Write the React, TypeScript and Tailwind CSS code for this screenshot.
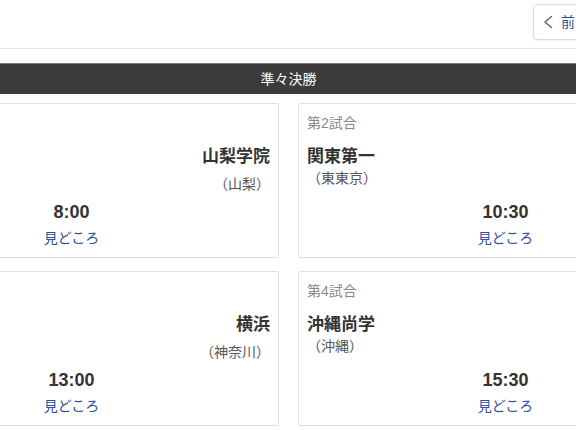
type Team = { name: string; pref: string };

interface Match {
  no: number;
  time: string;
  home: Team;
  away: Team;
}

const matches: Match[] = [
  {
    no: 1,
    time: "8:00",
    home: { name: "京都国際", pref: "京都" },
    away: { name: "山梨学院", pref: "山梨" },
  },
  {
    no: 2,
    time: "10:30",
    home: { name: "関東第一", pref: "東東京" },
    away: { name: "日大三", pref: "西東京" },
  },
  {
    no: 3,
    time: "13:00",
    home: { name: "県岐阜商", pref: "岐阜" },
    away: { name: "横浜", pref: "神奈川" },
  },
  {
    no: 4,
    time: "15:30",
    home: { name: "沖縄尚学", pref: "沖縄" },
    away: { name: "東洋大姫路", pref: "兵庫" },
  },
];

function Chevron({ dir }: { dir: "left" | "right" }) {
  return (
    <svg width="10" height="14" viewBox="0 0 10 14" fill="none">
      <polyline
        points={dir === "left" ? "8.5,1.5 2,7 8.5,12.5" : "1.5,1.5 8,7 1.5,12.5"}
        stroke="#666"
        strokeWidth="1.5"
        strokeLinecap="round"
        strokeLinejoin="round"
      />
    </svg>
  );
}

function MatchCard({ m }: { m: Match }) {
  return (
    <div className="flex h-[155px] flex-col rounded-[2px] border border-[#e0e0e0] bg-white px-2 pt-[10px]">
      <p className="text-[14px] leading-[18px] text-[#888]">第{m.no}試合</p>

      <div className="mt-[13px] flex items-start justify-between">
        <div>
          <p className="text-[17px] font-bold leading-6 text-[#333]">{m.home.name}</p>
          <p className="text-[14px] leading-[18px] text-[#555]">（{m.home.pref}）</p>
        </div>
        <div className="text-right">
          <p className="text-[17px] font-bold leading-6 text-[#333]">{m.away.name}</p>
          <p className="mt-[5px] text-[14px] leading-5 text-[#555]">（{m.away.pref}）</p>
        </div>
      </div>

      <p className="mt-[6px] text-center text-[18px] font-bold leading-6 text-[#333]">
        {m.time}
      </p>
      <a className="mt-1 block text-center text-[14px] leading-5 text-[#2b50a0]">
        見どころ
      </a>
    </div>
  );
}

export default function App() {
  return (
    <div className="h-[430px] w-[576px] overflow-hidden bg-white font-['Liberation_Sans','Noto_Sans_CJK_JP',sans-serif]">
      <div className="ml-[-136px] w-[849px]">
        {/* day navigation */}
        <div className="flex h-[49px] justify-end gap-2 border-b border-[#e8e8e8] pr-3 pt-1">
          <button className="flex h-9 w-20 items-center gap-2 rounded-[4px] border border-[#dcdcdc] bg-white pl-[9px] text-[14px] text-[#2b50a0] shadow-[0_1px_2px_rgba(0,0,0,0.06)]">
            <Chevron dir="left" />
            前日
          </button>
          <button className="flex h-9 w-20 items-center justify-end gap-2 rounded-[4px] border border-[#dcdcdc] bg-white pr-[9px] text-[14px] text-[#2b50a0]">
            翌日
            <Chevron dir="right" />
          </button>
        </div>

        {/* round header */}
        <div className="mt-[14px] flex h-[31px] items-center justify-center border-t border-[#7a7a7a] bg-[#3b3b3b] text-[14px] text-white">
          準々決勝
        </div>

        <div className="mt-[9px] grid grid-cols-2 gap-x-[19px] gap-y-[13px]">
          {matches.map((m) => (
            <MatchCard key={m.no} m={m} />
          ))}
        </div>
      </div>
    </div>
  );
}
